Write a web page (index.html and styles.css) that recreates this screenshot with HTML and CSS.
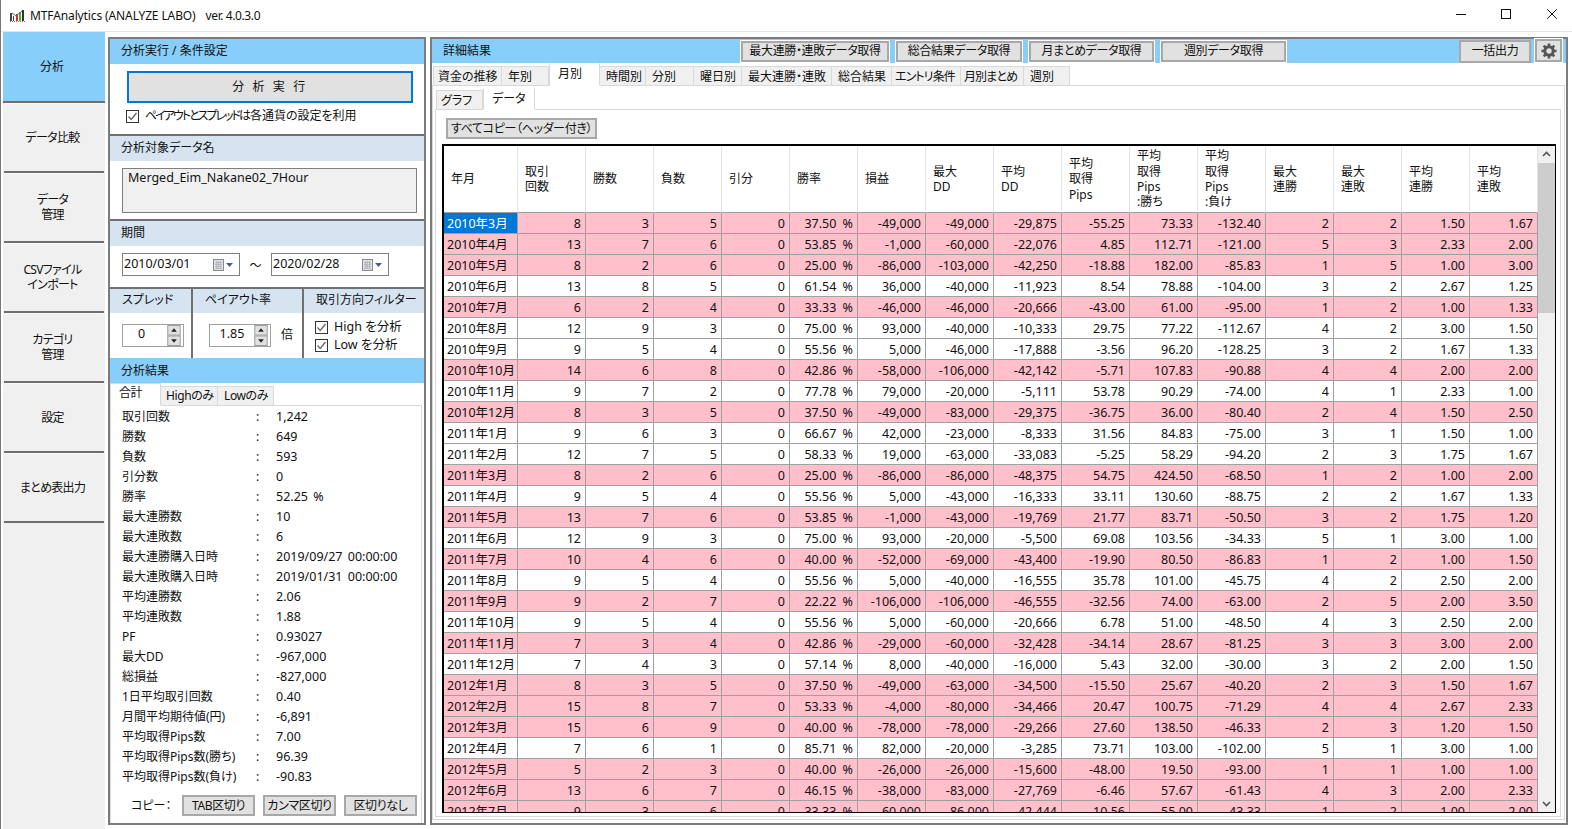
FILE: index.html
```html
<!DOCTYPE html>
<html lang="ja">
<head>
<meta charset="utf-8">
<title>MTFAnalytics (ANALYZE LABO)</title>
<link rel="stylesheet" href="styles.css">
</head>
<body>
<svg class="defs" width="0" height="0" aria-hidden="true">
  <symbol id="check" viewBox="0 0 13 13"><rect x=".5" y=".5" width="12" height="12" fill="#fff" stroke="#333"/><path d="M2.5 6.5 5.2 9.5 10.5 3" fill="none" stroke="#666" stroke-width="1.3"/></symbol>
  <symbol id="cal" viewBox="0 0 20 12"><rect x=".5" y=".5" width="10" height="11" fill="#dfe1e5" stroke="#8a8a8a"/><path d="M2 3.5h7M2 5.5h7M2 7.5h7M2 9.5h7M3.5 2v8M5.5 2v8M7.5 2v8" stroke="#a8acb3" stroke-width=".7"/><path d="M13 4h7l-3.500 4z" fill="#4a5f85"/></symbol>
  <symbol id="spin" viewBox="0 0 14 22"><rect width="14" height="22" fill="#f0f0f0"/><rect x=".5" y=".5" width="13" height="10" fill="#e1e1e1" stroke="#9a9a9a"/><rect x=".5" y="11.500" width="13" height="10" fill="#e1e1e1" stroke="#9a9a9a"/><path d="M7 3.500 10 7H4zM7 18.500 4 15h6z" fill="#222"/></symbol>
</svg>

<header class="titlebar">
  <svg class="app-icon" width="16" height="12" viewBox="0 0 16 12" aria-hidden="true">
    <path d="M0 3h2v8H0zM3 6h1v5H3z" fill="#444"/><path d="M6 4h2v7H6z" fill="#c33"/><path d="M9 2h2v9H9z" fill="#5a3"/><path d="M12 0h2v11h-2z" fill="#333"/><path d="M2 3l4 3 6-5" fill="none" stroke="#666"/><path d="M0 11.500h15" stroke="#777" stroke-dasharray="1 1"/>
  </svg>
  <span class="app-name">MTFAnalytics (ANALYZE LABO)</span>
  <span class="app-ver">ver. 4.0.3.0</span>
  <div class="win-controls">
    <svg width="10" height="10" viewBox="0 0 10 10" aria-hidden="true"><path d="M0 5.500h10" stroke="#111"/></svg>
    <svg width="10" height="10" viewBox="0 0 10 10" aria-hidden="true"><rect x=".5" y=".5" width="9" height="9" fill="none" stroke="#111"/></svg>
    <svg class="win-close" width="10" height="10" viewBox="0 0 10 10" aria-hidden="true"><path d="M.3.300l9.400 9.400M9.700.300.3 9.700" stroke="#111"/></svg>
  </div>
</header>

<div class="workspace">
  <nav class="sidenav">
    <div class="nav-item active">分析</div>
    <div class="nav-item">データ比較</div>
    <div class="nav-item">データ<br>管理</div>
    <div class="nav-item">CSVファイル<br>インポート</div>
    <div class="nav-item">カテゴリ<br>管理</div>
    <div class="nav-item">設定</div>
    <div class="nav-item">まとめ表出力</div>
  </nav>

  <section class="panel left">
    <div class="bar blue">分析実行 / 条件設定</div>
    <div class="run-body">
      <button class="run-btn">分 析 実 行</button>
      <label class="check run-check"><svg class="cb"><use href="#check"/></svg><span class="kana">ペイアウトとスプレッドは</span>各通貨の設定を利用</label>
    </div>
    <div class="bar pale ruled">分析対象データ名</div>
    <div class="name-body"><div class="name-box">Merged_Eim_Nakane02_7Hour</div></div>
    <div class="bar pale ruled">期間</div>
    <div class="period-body">
      <div class="date">2010/03/01<svg class="cal"><use href="#cal"/></svg></div>
      <span class="tilde">～</span>
      <div class="date">2020/02/28<svg class="cal"><use href="#cal"/></svg></div>
    </div>
    <div class="tri">
      <div class="tri-col c1">
        <div class="bar pale">スプレッド</div>
        <div class="tri-body"><div class="spinner s0"><span>0</span><svg class="spin"><use href="#spin"/></svg></div></div>
      </div>
      <div class="tri-col c2">
        <div class="bar pale">ペイアウト率</div>
        <div class="tri-body"><div class="spinner s1"><span>1.85</span><svg class="spin"><use href="#spin"/></svg></div><span class="times">倍</span></div>
      </div>
      <div class="tri-col c3">
        <div class="bar pale">取引方向フィルター</div>
        <div class="filter-body">
          <label class="check"><svg class="cb"><use href="#check"/></svg>High を分析</label>
          <label class="check"><svg class="cb"><use href="#check"/></svg>Low を分析</label>
        </div>
      </div>
    </div>
    <div class="bar blue result-bar">分析結果</div>
    <div class="mini-tabs">
      <span class="mini-tab on">合計</span><span class="mini-tab">Highのみ</span><span class="mini-tab">Lowのみ</span>
    </div>
    <div class="stats-box">
      <div class="stats">
        <span>取引回数</span><i>:</i><b>1,242</b>
        <span>勝数</span><i>:</i><b>649</b>
        <span>負数</span><i>:</i><b>593</b>
        <span>引分数</span><i>:</i><b>0</b>
        <span>勝率</span><i>:</i><b>52.25 %</b>
        <span>最大連勝数</span><i>:</i><b>10</b>
        <span>最大連敗数</span><i>:</i><b>6</b>
        <span>最大連勝購入日時</span><i>:</i><b>2019/09/27 00:00:00</b>
        <span>最大連敗購入日時</span><i>:</i><b>2019/01/31 00:00:00</b>
        <span>平均連勝数</span><i>:</i><b>2.06</b>
        <span>平均連敗数</span><i>:</i><b>1.88</b>
        <span>PF</span><i>:</i><b>0.93027</b>
        <span>最大DD</span><i>:</i><b>-967,000</b>
        <span>総損益</span><i>:</i><b>-827,000</b>
        <span>1日平均取引回数</span><i>:</i><b>0.40</b>
        <span>月間平均期待値(円)</span><i>:</i><b>-6,891</b>
        <span>平均取得Pips数</span><i>:</i><b>7.00</b>
        <span>平均取得Pips数(勝ち)</span><i>:</i><b>96.39</b>
        <span>平均取得Pips数(負け)</span><i>:</i><b>-90.83</b>
      </div>
      <div class="copy-row">
        <span class="copy-label">コピー：</span>
        <button class="btn copy">TAB区切り</button>
        <button class="btn copy">カンマ区切り</button>
        <button class="btn copy">区切りなし</button>
      </div>
    </div>
  </section>

  <section class="panel right">
    <div class="bar blue detail-bar">
      <span class="detail-title">詳細結果</span>
      <div class="detail-actions">
        <button class="btn act w1">最大連勝・連敗データ取得</button>
        <button class="btn act w2">総合結果データ取得</button>
        <button class="btn act w3">月まとめデータ取得</button>
        <button class="btn act w3">週別データ取得</button>
      </div>
      <div class="detail-end">
        <button class="btn act export">一括出力</button>
        <button class="btn act gear" aria-label="設定">
          <svg width="16" height="16" viewBox="0 0 16 16" aria-hidden="true"><circle cx="8" cy="8" r="4.200" fill="none" stroke="#555" stroke-width="3"/><path d="M8 .5v15M.5 8h15M2.700 2.700l10.600 10.600M13.300 2.700 2.700 13.300" stroke="#555" stroke-width="2.600" stroke-dasharray="3 9"/></svg>
        </button>
      </div>
    </div>
    <div class="main-tabs">
      <span class="tab">資金の推移</span><span class="tab">年別</span><span class="tab on">月別</span><span class="tab">時間別</span><span class="tab">分別</span><span class="tab">曜日別</span><span class="tab">最大連勝・連敗</span><span class="tab">総合結果</span><span class="tab tight">エントリ条件</span><span class="tab tight">月別まとめ</span><span class="tab">週別</span>
    </div>
    <div class="tab-frame">
      <div class="sub-tabs"><span class="tab">グラフ</span><span class="tab on">データ</span></div>
      <div class="sub-frame">
        <button class="btn copy-all">すべてコピー（ヘッダー付き）</button>
        <div class="grid-wrap">
          <div class="grid-clip">
            <table class="grid">
              <colgroup><col class="col-first"><col span="15" class="col-num"></colgroup>
              <thead><tr><th>年月</th><th>取引<br>回数</th><th>勝数</th><th>負数</th><th>引分</th><th>勝率</th><th>損益</th><th>最大<br>DD</th><th>平均<br>DD</th><th>平均<br>取得<br>Pips</th><th>平均<br>取得<br>Pips<br>:勝ち</th><th>平均<br>取得<br>Pips<br>:負け</th><th>最大<br>連勝</th><th>最大<br>連敗</th><th>平均<br>連勝</th><th>平均<br>連敗</th></tr></thead>
              <tbody>
<tr class="loss"><td class="sel">2010年3月</td><td>8</td><td>3</td><td>5</td><td>0</td><td>37.50 %</td><td>-49,000</td><td>-49,000</td><td>-29,875</td><td>-55.25</td><td>73.33</td><td>-132.40</td><td>2</td><td>2</td><td>1.50</td><td>1.67</td></tr>
<tr class="loss"><td>2010年4月</td><td>13</td><td>7</td><td>6</td><td>0</td><td>53.85 %</td><td>-1,000</td><td>-60,000</td><td>-22,076</td><td>4.85</td><td>112.71</td><td>-121.00</td><td>5</td><td>3</td><td>2.33</td><td>2.00</td></tr>
<tr class="loss"><td>2010年5月</td><td>8</td><td>2</td><td>6</td><td>0</td><td>25.00 %</td><td>-86,000</td><td>-103,000</td><td>-42,250</td><td>-18.88</td><td>182.00</td><td>-85.83</td><td>1</td><td>5</td><td>1.00</td><td>3.00</td></tr>
<tr><td>2010年6月</td><td>13</td><td>8</td><td>5</td><td>0</td><td>61.54 %</td><td>36,000</td><td>-40,000</td><td>-11,923</td><td>8.54</td><td>78.88</td><td>-104.00</td><td>3</td><td>2</td><td>2.67</td><td>1.25</td></tr>
<tr class="loss"><td>2010年7月</td><td>6</td><td>2</td><td>4</td><td>0</td><td>33.33 %</td><td>-46,000</td><td>-46,000</td><td>-20,666</td><td>-43.00</td><td>61.00</td><td>-95.00</td><td>1</td><td>2</td><td>1.00</td><td>1.33</td></tr>
<tr><td>2010年8月</td><td>12</td><td>9</td><td>3</td><td>0</td><td>75.00 %</td><td>93,000</td><td>-40,000</td><td>-10,333</td><td>29.75</td><td>77.22</td><td>-112.67</td><td>4</td><td>2</td><td>3.00</td><td>1.50</td></tr>
<tr><td>2010年9月</td><td>9</td><td>5</td><td>4</td><td>0</td><td>55.56 %</td><td>5,000</td><td>-46,000</td><td>-17,888</td><td>-3.56</td><td>96.20</td><td>-128.25</td><td>3</td><td>2</td><td>1.67</td><td>1.33</td></tr>
<tr class="loss"><td>2010年10月</td><td>14</td><td>6</td><td>8</td><td>0</td><td>42.86 %</td><td>-58,000</td><td>-106,000</td><td>-42,142</td><td>-5.71</td><td>107.83</td><td>-90.88</td><td>4</td><td>4</td><td>2.00</td><td>2.00</td></tr>
<tr><td>2010年11月</td><td>9</td><td>7</td><td>2</td><td>0</td><td>77.78 %</td><td>79,000</td><td>-20,000</td><td>-5,111</td><td>53.78</td><td>90.29</td><td>-74.00</td><td>4</td><td>1</td><td>2.33</td><td>1.00</td></tr>
<tr class="loss"><td>2010年12月</td><td>8</td><td>3</td><td>5</td><td>0</td><td>37.50 %</td><td>-49,000</td><td>-83,000</td><td>-29,375</td><td>-36.75</td><td>36.00</td><td>-80.40</td><td>2</td><td>4</td><td>1.50</td><td>2.50</td></tr>
<tr><td>2011年1月</td><td>9</td><td>6</td><td>3</td><td>0</td><td>66.67 %</td><td>42,000</td><td>-23,000</td><td>-8,333</td><td>31.56</td><td>84.83</td><td>-75.00</td><td>3</td><td>1</td><td>1.50</td><td>1.00</td></tr>
<tr><td>2011年2月</td><td>12</td><td>7</td><td>5</td><td>0</td><td>58.33 %</td><td>19,000</td><td>-63,000</td><td>-33,083</td><td>-5.25</td><td>58.29</td><td>-94.20</td><td>2</td><td>3</td><td>1.75</td><td>1.67</td></tr>
<tr class="loss"><td>2011年3月</td><td>8</td><td>2</td><td>6</td><td>0</td><td>25.00 %</td><td>-86,000</td><td>-86,000</td><td>-48,375</td><td>54.75</td><td>424.50</td><td>-68.50</td><td>1</td><td>2</td><td>1.00</td><td>2.00</td></tr>
<tr><td>2011年4月</td><td>9</td><td>5</td><td>4</td><td>0</td><td>55.56 %</td><td>5,000</td><td>-43,000</td><td>-16,333</td><td>33.11</td><td>130.60</td><td>-88.75</td><td>2</td><td>2</td><td>1.67</td><td>1.33</td></tr>
<tr class="loss"><td>2011年5月</td><td>13</td><td>7</td><td>6</td><td>0</td><td>53.85 %</td><td>-1,000</td><td>-43,000</td><td>-19,769</td><td>21.77</td><td>83.71</td><td>-50.50</td><td>3</td><td>2</td><td>1.75</td><td>1.20</td></tr>
<tr><td>2011年6月</td><td>12</td><td>9</td><td>3</td><td>0</td><td>75.00 %</td><td>93,000</td><td>-20,000</td><td>-5,500</td><td>69.08</td><td>103.56</td><td>-34.33</td><td>5</td><td>1</td><td>3.00</td><td>1.00</td></tr>
<tr class="loss"><td>2011年7月</td><td>10</td><td>4</td><td>6</td><td>0</td><td>40.00 %</td><td>-52,000</td><td>-69,000</td><td>-43,400</td><td>-19.90</td><td>80.50</td><td>-86.83</td><td>1</td><td>2</td><td>1.00</td><td>1.50</td></tr>
<tr><td>2011年8月</td><td>9</td><td>5</td><td>4</td><td>0</td><td>55.56 %</td><td>5,000</td><td>-40,000</td><td>-16,555</td><td>35.78</td><td>101.00</td><td>-45.75</td><td>4</td><td>2</td><td>2.50</td><td>2.00</td></tr>
<tr class="loss"><td>2011年9月</td><td>9</td><td>2</td><td>7</td><td>0</td><td>22.22 %</td><td>-106,000</td><td>-106,000</td><td>-46,555</td><td>-32.56</td><td>74.00</td><td>-63.00</td><td>2</td><td>5</td><td>2.00</td><td>3.50</td></tr>
<tr><td>2011年10月</td><td>9</td><td>5</td><td>4</td><td>0</td><td>55.56 %</td><td>5,000</td><td>-60,000</td><td>-20,666</td><td>6.78</td><td>51.00</td><td>-48.50</td><td>4</td><td>3</td><td>2.50</td><td>2.00</td></tr>
<tr class="loss"><td>2011年11月</td><td>7</td><td>3</td><td>4</td><td>0</td><td>42.86 %</td><td>-29,000</td><td>-60,000</td><td>-32,428</td><td>-34.14</td><td>28.67</td><td>-81.25</td><td>3</td><td>3</td><td>3.00</td><td>2.00</td></tr>
<tr><td>2011年12月</td><td>7</td><td>4</td><td>3</td><td>0</td><td>57.14 %</td><td>8,000</td><td>-40,000</td><td>-16,000</td><td>5.43</td><td>32.00</td><td>-30.00</td><td>3</td><td>2</td><td>2.00</td><td>1.50</td></tr>
<tr class="loss"><td>2012年1月</td><td>8</td><td>3</td><td>5</td><td>0</td><td>37.50 %</td><td>-49,000</td><td>-63,000</td><td>-34,500</td><td>-15.50</td><td>25.67</td><td>-40.20</td><td>2</td><td>3</td><td>1.50</td><td>1.67</td></tr>
<tr class="loss"><td>2012年2月</td><td>15</td><td>8</td><td>7</td><td>0</td><td>53.33 %</td><td>-4,000</td><td>-80,000</td><td>-34,466</td><td>20.47</td><td>100.75</td><td>-71.29</td><td>4</td><td>4</td><td>2.67</td><td>2.33</td></tr>
<tr class="loss"><td>2012年3月</td><td>15</td><td>6</td><td>9</td><td>0</td><td>40.00 %</td><td>-78,000</td><td>-78,000</td><td>-29,266</td><td>27.60</td><td>138.50</td><td>-46.33</td><td>2</td><td>3</td><td>1.20</td><td>1.50</td></tr>
<tr><td>2012年4月</td><td>7</td><td>6</td><td>1</td><td>0</td><td>85.71 %</td><td>82,000</td><td>-20,000</td><td>-3,285</td><td>73.71</td><td>103.00</td><td>-102.00</td><td>5</td><td>1</td><td>3.00</td><td>1.00</td></tr>
<tr class="loss"><td>2012年5月</td><td>5</td><td>2</td><td>3</td><td>0</td><td>40.00 %</td><td>-26,000</td><td>-26,000</td><td>-15,600</td><td>-48.00</td><td>19.50</td><td>-93.00</td><td>1</td><td>1</td><td>1.00</td><td>1.00</td></tr>
<tr class="loss"><td>2012年6月</td><td>13</td><td>6</td><td>7</td><td>0</td><td>46.15 %</td><td>-38,000</td><td>-83,000</td><td>-27,769</td><td>-6.46</td><td>57.67</td><td>-61.43</td><td>4</td><td>3</td><td>2.00</td><td>2.33</td></tr>
<tr class="loss"><td>2012年7月</td><td>9</td><td>3</td><td>6</td><td>0</td><td>33.33 %</td><td>-60,000</td><td>-86,000</td><td>-42,444</td><td>-10.56</td><td>55.00</td><td>-43.33</td><td>1</td><td>2</td><td>1.00</td><td>2.00</td></tr>
              </tbody>
            </table>
          </div>
          <div class="scrollbar">
            <svg class="chev" width="17" height="17" viewBox="0 0 17 17" aria-hidden="true"><path d="M5 10l3.500-3.500L12 10" fill="none" stroke="#555" stroke-width="1.600"/></svg>
            <div class="thumb"></div>
            <div class="track"></div>
            <svg class="chev" width="17" height="17" viewBox="0 0 17 17" aria-hidden="true"><path d="M5 7l3.500 3.500L12 7" fill="none" stroke="#555" stroke-width="1.600"/></svg>
          </div>
        </div>
      </div>
    </div>
  </section>
</div>
</body>
</html>
```
FILE: styles.css
```css
* { box-sizing: border-box; }
html, body { margin: 0; height: 100%; }
body {
  width: 1572px; height: 829px; overflow: hidden; display: flex; flex-direction: column;
  background: #fff; color: #111; border-left: 1px solid #777;
  font: 12px/16px "Noto Sans", "Noto Sans CJK JP", sans-serif;
  font-feature-settings: "palt";
  white-space: nowrap;
}
.defs { position: absolute; }

.titlebar { height: 31px; flex: none; display: flex; align-items: center; padding-left: 9px; background: #fff; font-size: 12px; letter-spacing: -.12px; }
.app-icon { margin-right: 4px; }
.app-name { margin-right: 10px; }
.app-ver { letter-spacing: -.4px; }
.win-controls { margin-left: auto; display: flex; gap: 35px; padding-right: 15px; margin-top: -4px; }
.win-close { margin-left: 1px; }

.workspace { flex: 1; min-height: 0; display: flex; border-top: 1px solid #e6e6e6; padding-left: 2px; }

.sidenav { width: 102px; flex: none; background: #f0f0f0; margin-right: 3px; padding-bottom: 4px; }
.nav-item {
  height: 70px; width: 100px; margin-left: 1px; padding: 0 3px 1px 0; display: flex; align-items: center; justify-content: center;
  text-align: center; line-height: 15px; letter-spacing: -.7px; border-top: 1px solid #fafafa; border-bottom: 2px solid #6e6e6e; border-radius: 3px 3px 0 0;
}
.nav-item.active { height: 71px; width: 102px; margin-left: 0; padding: 0 4px 0 0; background: #87cefa; border-top: 0; border-radius: 0; letter-spacing: 0; }

.panel { height: 788px; margin-top: 5px; border: 2px solid #7c7c7c; background: #fff; display: flex; flex-direction: column; }
.left { width: 318px; margin-right: 4px; }
.right { width: 1138px; }

.bar { height: 25px; flex: none; display: flex; align-items: center; padding: 0 0 1px 11px; }
.blue { background: #87cefa; }
.pale { background: #d6e4f2; }
.ruled { border-top: 2px solid #707070; height: 27px; }
.result-bar { padding: 1px 0 0 11px; }

.btn { padding: 0 0 1px; margin: 0; font: inherit; color: inherit; background: #e1e1e1; border: 2px solid #a8a8a8; font-feature-settings: inherit; letter-spacing: -.35px; }

.run-body { height: 70px; padding: 7px 0 0 17px; }
.run-btn { display: block; width: 286px; height: 32px; padding: 0; font: inherit; font-feature-settings: inherit; letter-spacing: 2.600px; background: #e1e1e1; border: 2px solid #0078d7; color: #111; }
.check { display: flex; align-items: center; }
.cb { width: 13px; height: 13px; flex: none; margin-right: 6px; }
.run-check { margin: 5px 0 0 -1px; }
.kana { letter-spacing: -2px; margin-right: 1px; }

.name-body { height: 58px; padding: 7px 7px 0 12px; }
.name-box { height: 45px; background: #f0f0f0; border: 1px solid #808080; padding: 1px 5px; font-size: 12.500px; }

.period-body { height: 41px; display: flex; align-items: flex-start; padding: 7px 0 0 12px; }
.date { width: 118px; height: 23px; border: 1px solid #808080; display: flex; align-items: center; justify-content: space-between; padding: 0 6px 1px 1px; font-size: 12.500px; }
.cal { width: 20px; height: 12px; margin-top: 1px; }
.tilde { width: 31px; text-align: center; padding-top: 5px; }

.tri { height: 71px; flex: none; display: flex; border-top: 2px solid #707070; }
.tri-col { display: flex; flex-direction: column; flex: none; }
.tri-col .bar { height: 24px; padding: 0 0 3px 12px; }
.c1 { width: 83px; border-right: 2px solid #707070; }
.c2 { width: 111px; border-right: 2px solid #707070; }
.c3 { flex: 1; }
.tri-body { display: flex; align-items: flex-start; padding-top: 11px; }
.spinner { width: 62px; height: 23px; border: 1px solid #a0a0a0; display: flex; justify-content: space-between; align-items: center; font-size: 12.500px; }
.spinner span { flex: 1; text-align: center; padding-bottom: 3px; }
.spin { width: 14px; height: 21px; flex: none; margin-right: 2px; }
.s0 { margin-left: 12px; }
.s0 span { padding-right: 7px; }
.s1 { margin-left: 16px; }
.times { margin-left: 10px; line-height: 21px; }
.filter-body { padding: 6px 0 0 11px; display: flex; flex-direction: column; gap: 2px; font-size: 12.500px; }

.mini-tabs { height: 23px; flex: none; display: flex; align-items: flex-end; margin-bottom: -1px; position: relative; }
.mini-tab { height: 20px; padding: 0 5px; line-height: 18px; border: 1px solid #d9d9d9; border-left: 0; background: #f0f0f0; font-size: 12px; letter-spacing: -.4px; }
.mini-tab:nth-child(2) { width: 57px; padding: 0 0 0 5px; }
.mini-tab:nth-child(3) { width: 56px; padding: 0 0 0 6px; }
.mini-tab.on { width: 51px; height: 23px; padding: 0 0 3px 8px; background: #fff; border-bottom-color: #fff; border-left: 1px solid #d9d9d9; }
.stats-box { flex: 1; min-height: 0; border: 1px solid #d9d9d9; border-bottom: 0; margin-right: 2px; padding: 1px 0 0 11px; }
.stats { display: grid; grid-template-columns: 134px 19px 1fr; grid-auto-rows: 20px; line-height: 20px; }
.stats i { font-style: normal; }
.stats b { font-weight: 400; font-size: 12.500px; padding-left: 1px; word-spacing: 2px; }
.copy-row { display: flex; align-items: center; gap: 8px; margin-top: 8px; }
.copy-label { width: 52px; flex: none; padding-left: 9px; }
.btn.copy { width: 73px; height: 21px; flex: none; line-height: 15px; }

.detail-bar { height: 24px; padding: 0; }
.detail-title { width: 309px; padding-left: 11px; }
.detail-actions { display: flex; gap: 7px; }
.act { height: 21px; margin-top: 0; box-shadow: 0 0 0 1px #fff; line-height: 15px; padding-bottom: 2px; }
.w1 { width: 148px; }
.w2 { width: 126px; }
.w3 { width: 125px; }
.detail-end { margin-left: auto; display: flex; gap: 4px; margin-right: 4px; }
.export { width: 72px; height: 23px; box-shadow: none; margin-top: 1px; }
.gear { width: 27px; height: 23px; display: flex; align-items: center; justify-content: center; padding: 0; }

.main-tabs {
  height: 23px; flex: none; display: grid; align-items: end; padding-left: 1px; margin-bottom: -1px; position: relative;
  grid-template-columns: 69px 47px 51px 46px 48px 48px 90px 60px 69px 63px 46px;
  justify-content: start;
}
.tab { height: 20px; display: block; line-height: 20px; padding-left: 6px; background: #f0f0f0; border: 1px solid #d9d9d9; border-left: 0; }
.tab:first-child { border-left: 1px solid #d9d9d9; padding-left: 4px; }
.tab.tight { letter-spacing: -.9px; padding-left: 3px; }
.tab.on { height: 23px; line-height: 20px; background: #fff; border-bottom-color: #fff; padding-left: 8px; border-left: 1px solid #d9d9d9; border-top-color: #fff; }

.tab-frame { height: 735px; width: 1133px; flex: none; border: 1px solid #d9d9d9; padding: 2px 3px 0 2px; display: flex; flex-direction: column; }
.sub-tabs { height: 22px; flex: none; display: grid; grid-template-columns: 47px 52px; justify-content: start; align-items: end; padding-left: 1px; margin-bottom: -1px; position: relative; }
.sub-tabs .tab { height: 20px; }
.sub-tabs .tab.on { height: 22px; }
.sub-frame { height: 708px; width: 1126px; flex: none; border: 1px solid #d9d9d9; padding: 8px 0 0 6px; }
.copy-all { display: block; width: 151px; height: 21px; margin-left: 4px; line-height: 15px; }

.grid-wrap { width: 1114px; height: 669px; margin-top: 5px; border-style: solid; border-color: #000; border-width: 2px 1px 1px 2px; display: flex; background: #fff; }
.grid-clip { width: 1094px; overflow: hidden; flex: none; height: 100%; }
.grid { width: 1094px; table-layout: fixed; border-collapse: separate; border-spacing: 0; font-size: 12.500px; }
.col-first { width: 74px; }
.col-num { width: 68px; }
.grid th { height: 67px; padding: 0 0 0 7px; text-align: left; font-weight: 400; font-size: 12px; line-height: 15.300px; border-right: 1px solid #e4e4e4; border-bottom: 1px solid #a0a0a0; }
.grid td { height: 21px; padding: 2px 4px 0 0; text-align: right; line-height: 18px; word-spacing: 3px; border-right: 1px solid #a0a0a0; border-bottom: 1px solid #a0a0a0; overflow: hidden; }
.grid td:first-child { text-align: left; padding: 2px 0 0 3px; }
.loss td { background: #ffc0cb; }
.grid td.sel { background: #0078d7; color: #fff; }
.scrollbar { width: 17px; flex: none; background: #f0f0f0; display: flex; flex-direction: column; }
.chev { display: block; flex: none; }
.thumb { height: 150px; flex: none; background: #cdcdcd; }
.track { flex: 1; }
```
